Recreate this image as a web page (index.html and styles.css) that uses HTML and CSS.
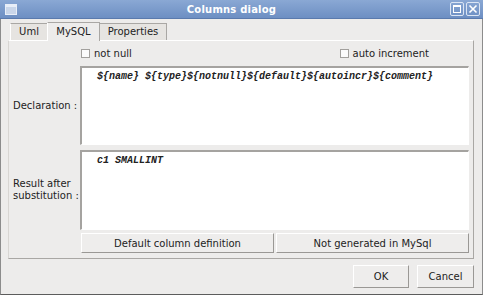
FILE: index.html
```html
<!DOCTYPE html>
<html lang="en">
<head>
    <meta charset="UTF-8">
    <title>Columns dialog</title>
    <link rel="stylesheet" href="styles.css">
</head>
<body>
<div class="window">
    <!--标题栏-->
    <div class="titlebar">
        <span class="winicon"></span>
        <span class="title">Columns dialog</span>
        <span class="tbtn"><span class="maxbox"></span></span>
        <span class="tbtn">
            <svg width="10" height="10" viewBox="0 0 10 10"><path d="M1.5 1.5 L8.5 8.5 M8.5 1.5 L1.5 8.5" stroke="#fff" stroke-width="1.6"/></svg>
        </span>
    </div>
    <div class="content">
        <!--选项卡-->
        <div class="tabs">
            <span class="tab uml">Uml</span>
            <span class="tab current">MySQL</span>
            <span class="tab props">Properties</span>
        </div>
        <div class="pane">
            <div class="checks">
                <label class="check"><span class="box"></span>not null</label>
                <label class="check"><span class="box"></span>auto increment</label>
            </div>
            <div class="field decl">
                <div class="label">Declaration :</div>
                <div class="edit">${name} ${type}${notnull}${default}${autoincr}${comment}</div>
            </div>
            <div class="field result">
                <div class="label">Result after<br>substitution :</div>
                <div class="edit">c1 SMALLINT</div>
            </div>
            <div class="actions">
                <button class="btn wide">Default column definition</button>
                <button class="btn wide">Not generated in MySql</button>
            </div>
        </div>
        <div class="footer">
            <button class="btn ok">OK</button>
            <button class="btn cancel">Cancel</button>
        </div>
    </div>
</div>
</body>
</html>
```

FILE: styles.css
```css
* {
    padding: 0;
    margin: 0;
    box-sizing: border-box;
}

body {
    font-family: "DejaVu Sans", sans-serif;
    font-size: 10px;
    color: #222;
    background: #edeceb;
}

.window {
    width: 483px;
    height: 295px;
    border: 1px solid #8c8c8c;
    border-top: 0;
    border-bottom-color: #5c5c5c;
    background: #edeceb;
    display: flex;
    flex-direction: column;
}

.titlebar {
    height: 19px;
    margin: 0 -1px;
    background: linear-gradient(#8aa8d4, #6d8fc3);
    border-bottom: 1px solid #5a7aad;
    display: flex;
    align-items: center;
    padding: 0 3px 0 5px;
}

.winicon {
    width: 12px;
    height: 11px;
    border: 1px solid #e8eef8;
    border-top-width: 3px;
    background: #c9d6ea;
}

.title {
    flex: 1;
    text-align: center;
    color: #fff;
    font-weight: bold;
    font-size: 10px;
    letter-spacing: 0.2px;
    padding-right: 2px;
}

.tbtn {
    width: 14px;
    height: 14px;
    border: 1px solid #dbe5f4;
    border-radius: 2px;
    margin-left: 2px;
    display: flex;
    align-items: center;
    justify-content: center;
}

.maxbox {
    width: 8px;
    height: 8px;
    border: 1px solid #fff;
    border-top-width: 2px;
}

.content {
    flex: 1;
    padding: 2px 8px 0 7px;
    display: flex;
    flex-direction: column;
}

.tabs {
    display: flex;
    align-items: flex-end;
    height: 19px;
    padding-left: 2px;
}

.tab {
    height: 17px;
    line-height: 16px;
    text-align: center;
    border: 1px solid #a9a7a4;
    border-bottom: 0;
    border-left-color: #fff;
    background: #e6e4e1;
    margin-right: -1px;
}

.tab.uml {
    width: 38px;
}

.tab.props {
    width: 68px;
}

.tab.current {
    width: 53px;
    height: 19px;
    line-height: 18px;
    background: #edeceb;
    position: relative;
    z-index: 1;
    margin-bottom: -1px;
}

.pane {
    height: 219px;
    border: 1px solid #a9a7a4;
    border-left-color: #d8d6d3;
    border-top-color: #fff;
    padding: 5px 4px 0 4px;
    display: flex;
    flex-direction: column;
}

.checks {
    display: flex;
    justify-content: space-between;
    padding-left: 68px;
    padding-right: 40px;
    height: 15px;
    margin-bottom: 5px;
}

.check {
    display: flex;
    align-items: center;
}

.box {
    width: 9px;
    height: 9px;
    border: 1px solid #a2a09d;
    background: #fbfbfb;
    margin-right: 4px;
}

.field {
    display: flex;
    align-items: center;
}

.label {
    width: 67px;
    line-height: 12px;
    white-space: nowrap;
}

.edit {
    flex: 1;
    align-self: stretch;
    background: #fff;
    border: 1px solid #fff;
    border-top: 2px solid #a5a3a0;
    border-left: 2px solid #a5a3a0;
    font-family: "Liberation Mono", monospace;
    font-weight: bold;
    font-style: italic;
    font-size: 10px;
    padding: 3px 0 0 15px;
    white-space: nowrap;
}

.decl {
    height: 79px;
    margin-bottom: 5px;
}

.result {
    height: 80px;
}

.actions {
    display: flex;
    gap: 2px;
    padding-left: 68px;
    margin-top: 3px;
}

.btn {
    font-family: "DejaVu Sans", sans-serif;
    font-size: 10px;
    color: #222;
    background: #eeedec;
    border: 1px solid #fff;
    border-right-color: #9a9895;
    border-bottom-color: #9a9895;
    height: 20px;
}

.btn.wide {
    flex: 1;
}

.footer {
    display: flex;
    justify-content: flex-end;
    gap: 8px;
    margin-top: 6px;
}

.btn.ok {
    width: 56px;
    height: 23px;
}

.btn.cancel {
    width: 57px;
    height: 23px;
}
```
